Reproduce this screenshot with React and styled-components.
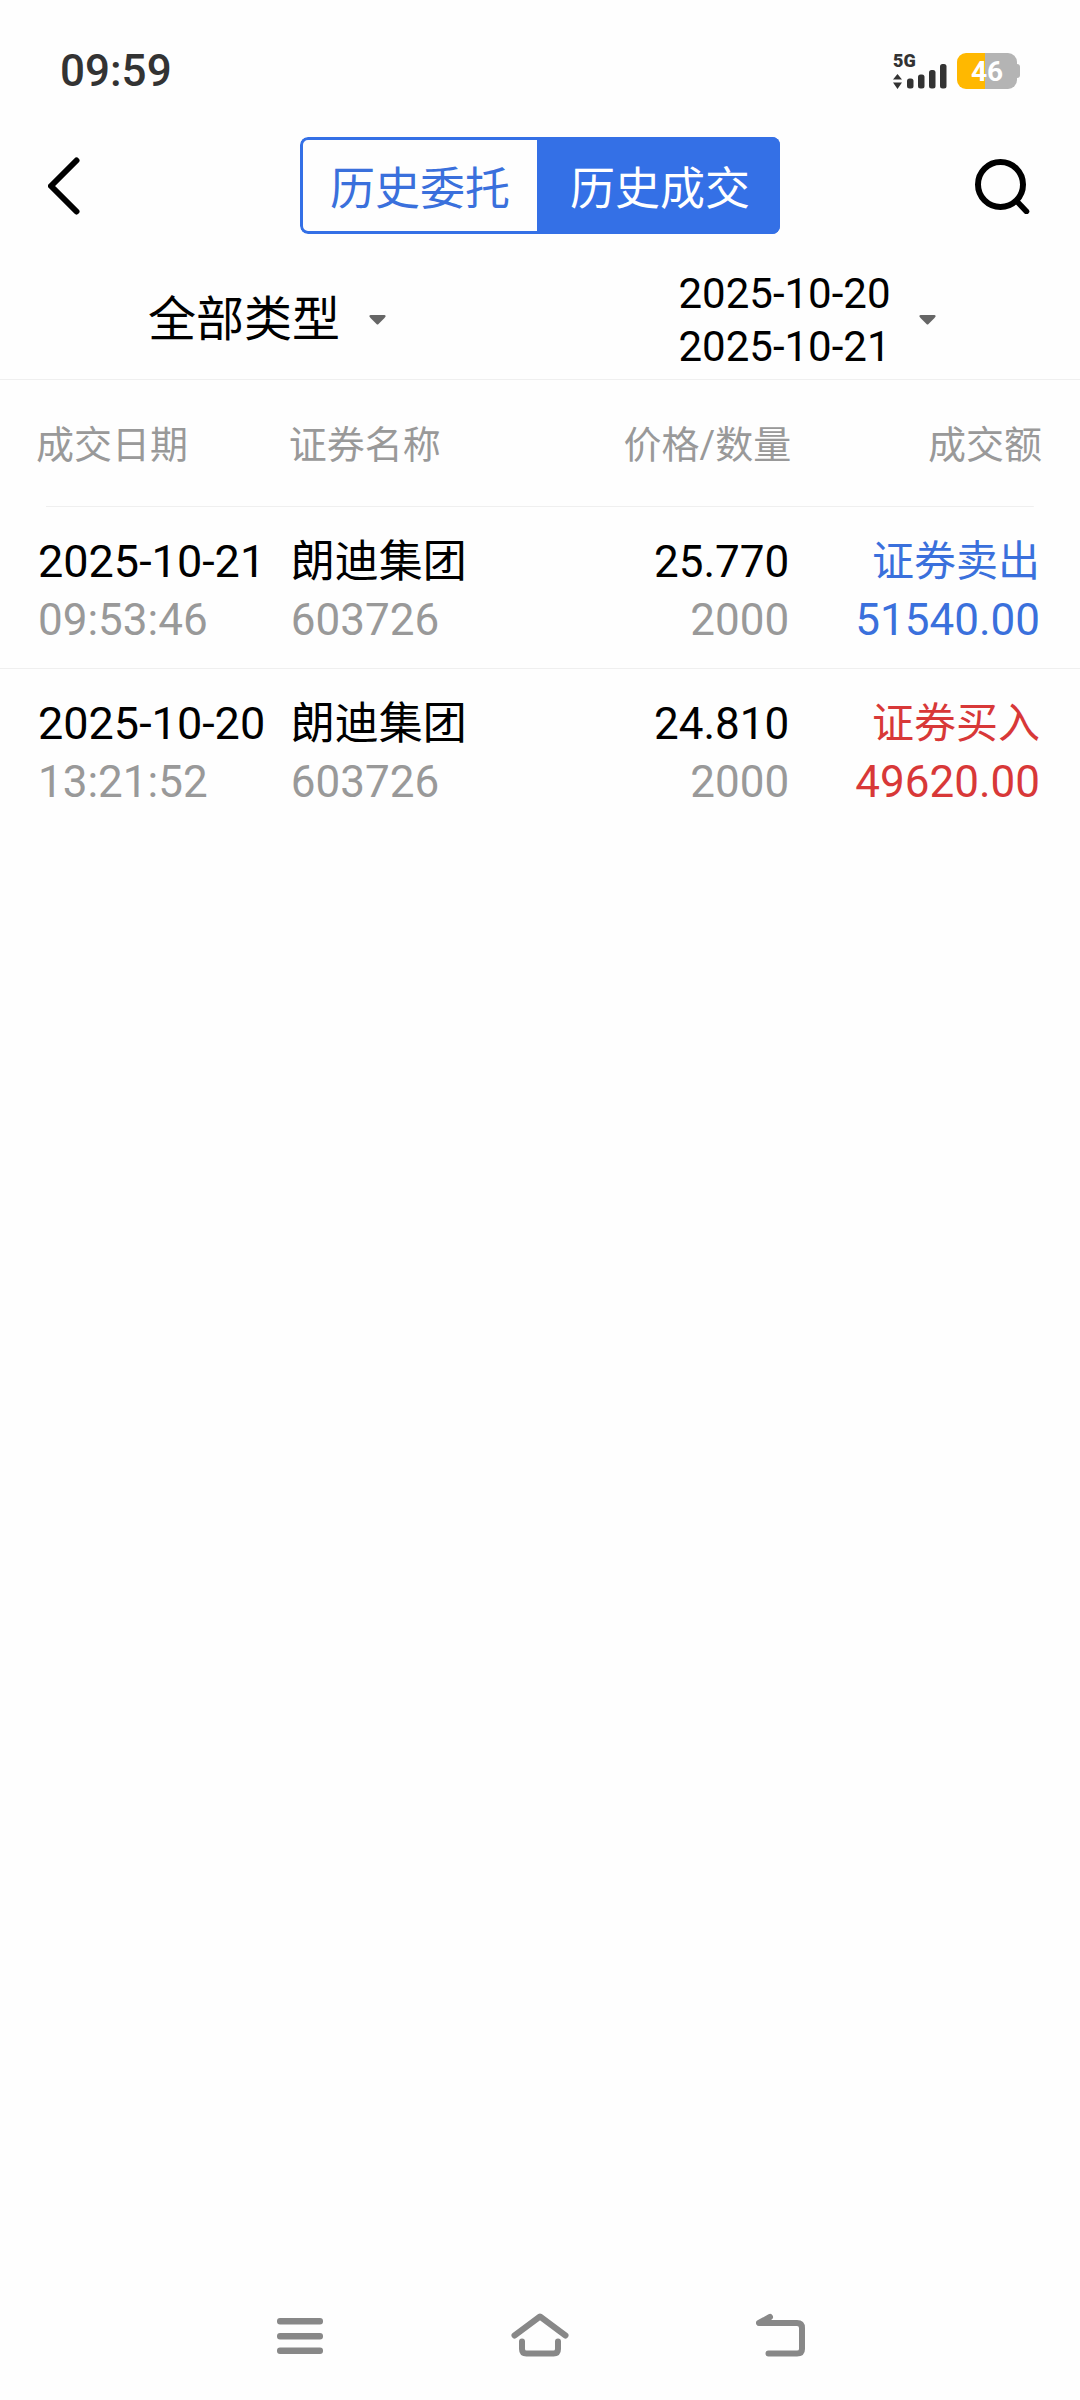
import React, { useState } from 'react';
import styled, { createGlobalStyle } from 'styled-components';

const types = ['全部类型', '证券买入', '证券卖出'];

const deals = [
    { date: '2025-10-21', time: '09:53:46', name: '朗迪集团', code: '603726', price: '25.770', amount: '2000', side: 'sell', sideText: '证券卖出', total: '51540.00' },
    { date: '2025-10-20', time: '13:21:52', name: '朗迪集团', code: '603726', price: '24.810', amount: '2000', side: 'buy', sideText: '证券买入', total: '49620.00' },
];

const Status = () => (
    <StatusBar>
        <Clock>09:59</Clock>
        <StatusRight>
            <Network>
                <span>5G</span>
                <svg width="54" height="26" viewBox="0 0 54 26" fill="#333">
                    <path d="M4.5 11L9 16.5H0ZM4.5 26L0 19.5H9Z" />
                    <rect x="14" y="15.5" width="6.5" height="10" rx="2.5" />
                    <rect x="25" y="11.5" width="6.5" height="14" rx="2.5" />
                    <rect x="36" y="7" width="6.5" height="18.5" rx="2.5" />
                    <rect x="47" y="1" width="6.5" height="24.5" rx="2.5" />
                </svg>
            </Network>
            <Battery>
                <BatteryBody>46</BatteryBody>
                <BatteryTip />
            </Battery>
        </StatusRight>
    </StatusBar>
);

const Arrow = () => (
    <svg width="17" height="10" viewBox="0 0 17 10" fill="#666">
        <path d="M1.5 0H15.5Q17 0 16.5 1.5L15.5 3L9.5 9Q8.5 10 7.5 9L1.5 3L0.5 1.5Q0 0 1.5 0Z" />
    </svg>
);

const App = () => {
    const [tab, setTab] = useState('deals');
    const [type, setType] = useState(types[0]);

    return (
        <>
            <GlobalStyle />
            <Page>
                <Status />
                <Header>
                    <IconButton aria-label="返回">
                        <svg width="32" height="58" viewBox="0 0 32 58" fill="none" stroke="#000" strokeWidth="6" strokeLinecap="round" strokeLinejoin="round">
                            <path d="M28.5 3.5L3 29L28.5 54.5" />
                        </svg>
                    </IconButton>
                    <Tabs role="tablist">
                        <Tab role="tab" aria-selected={tab === 'orders'} $active={tab === 'orders'} onClick={() => setTab('orders')}>历史委托</Tab>
                        <Tab role="tab" aria-selected={tab === 'deals'} $active={tab === 'deals'} onClick={() => setTab('deals')}>历史成交</Tab>
                    </Tabs>
                    <IconButton aria-label="搜索">
                        <svg width="57" height="56" viewBox="0 0 57 56" fill="none" stroke="#000" strokeLinecap="round">
                            <circle cx="25.5" cy="26.5" r="22.5" strokeWidth="6" />
                            <path d="M42.5 44L51.5 53.5" strokeWidth="5.5" />
                        </svg>
                    </IconButton>
                </Header>
                <Filters>
                    <Filter>
                        <TypeSelect aria-label="类型" value={type} onChange={(e) => setType(e.target.value)}>
                            {types.map((t) => <option key={t}>{t}</option>)}
                        </TypeSelect>
                        <Arrow />
                    </Filter>
                    <Filter>
                        <DateButton>
                            <span>
                                2025-10-20<br />2025-10-21
                            </span>
                            <Arrow />
                        </DateButton>
                    </Filter>
                </Filters>
                <Table>
                    <thead>
                        <tr>
                            <Th>成交日期</Th>
                            <Th>证券名称</Th>
                            <Th>价格/数量</Th>
                            <Th>成交额</Th>
                        </tr>
                    </thead>
                    <tbody>
                        {deals.map((deal, i) => (
                            <Row key={deal.date} $line={i < deals.length - 1}>
                                <Td>
                                    <DealDate>{deal.date}</DealDate>
                                    <Sub>{deal.time}</Sub>
                                </Td>
                                <Td>
                                    <Main>{deal.name}</Main>
                                    <Sub>{deal.code}</Sub>
                                </Td>
                                <Td>
                                    <Main>{deal.price}</Main>
                                    <Sub>{deal.amount}</Sub>
                                </Td>
                                <Td>
                                    <Side $side={deal.side}>{deal.sideText}</Side>
                                    <Total $side={deal.side}>{deal.total}</Total>
                                </Td>
                            </Row>
                        ))}
                    </tbody>
                </Table>
                <NavBar>
                    <IconButton aria-label="最近任务">
                        <svg width="46" height="36" viewBox="0 0 46 36" fill="#888">
                            <rect width="46" height="6.5" rx="3" />
                            <rect y="15" width="46" height="6.5" rx="3" />
                            <rect y="29.5" width="46" height="6.5" rx="3" />
                        </svg>
                    </IconButton>
                    <IconButton aria-label="主屏幕">
                        <svg width="58" height="46" viewBox="0 0 58 46" fill="none" stroke="#888" strokeWidth="6" strokeLinecap="round" strokeLinejoin="round">
                            <path d="M3.5 22.5L29 3.5L54.5 22.5" />
                            <path d="M11 28.5V36Q11 40.5 15.5 40.5H42.5Q47 40.5 47 36V28.5" />
                        </svg>
                    </IconButton>
                    <IconButton aria-label="后退">
                        <svg width="49" height="46" viewBox="0 0 49 46" fill="none" stroke="#888" strokeWidth="6" strokeLinecap="round" strokeLinejoin="round">
                            <path d="M14 4L3 10H41Q46 10 46 15V36Q46 40.5 41 40.5H12.5" />
                        </svg>
                    </IconButton>
                </NavBar>
            </Page>
        </>
    );
};

export default App;

const GlobalStyle = createGlobalStyle`
    *{
        box-sizing: border-box;
    }
    body{
        margin: 0;
        background: #fefefe;
        color: #000;
        font-family: Roboto, "Noto Sans CJK SC", sans-serif;
    }
    button, select{
        margin: 0;
        padding: 0;
        border: none;
        background: none;
        color: inherit;
        font: inherit;
        cursor: pointer;
    }
    svg{
        display: block;
        flex: none;
    }
`

const colors = {
    sell: '#3a70dc',
    buy: '#d83838',
}

const Page = styled.div`
    min-height: 100vh;
    display: flex;
    flex-direction: column;
`

const StatusBar = styled.div`
    height: 121px;
    padding: 20px 60px 0;
    display: flex;
    justify-content: space-between;
    align-items: center;
    color: #333;
`

const Clock = styled.div`
    font-size: 44px;
    font-weight: 500;
`

const StatusRight = styled.div`
    display: flex;
    align-items: center;
    gap: 10px;
`

const Network = styled.div`
    display: flex;
    flex-direction: column;
    font-size: 18px;
    font-weight: 900;
    line-height: 16px;
    svg{
        margin-top: -6px;
    }
`

const Battery = styled.div`
    display: flex;
    align-items: center;
`

const BatteryBody = styled.div`
    width: 60px;
    height: 36px;
    border-radius: 9px;
    background: linear-gradient(to right, #ffb800 46%, #b4b4b4 46%);
    color: #fff;
    font-size: 28px;
    font-weight: 700;
    line-height: 37px;
    text-align: center;
`

const BatteryTip = styled.div`
    width: 3px;
    height: 14px;
    border-radius: 0 3px 3px 0;
    background: #b4b4b4;
`

const Header = styled.header`
    height: 129px;
    padding: 0 48px;
    display: grid;
    grid-template-columns: 1fr auto 1fr;
    align-items: center;
    > :last-child{
        justify-self: end;
    }
    > :first-child{
        justify-self: start;
    }
`

const IconButton = styled.button`
    display: flex;
    justify-content: center;
    align-items: center;
`

const Tabs = styled.div`
    display: flex;
    border-radius: 8px;
    overflow: hidden;
`

const Tab = styled.button`
    width: 240px;
    height: 97px;
    border: 3px solid #3470e6;
    background: ${props => props.$active ? '#3470e6' : 'transparent'};
    color: ${props => props.$active ? '#fff' : '#3a70dc'};
    font-size: 45px;
    &:first-child{
        border-radius: 8px 0 0 8px;
    }
`

const Filters = styled.div`
    height: 130px;
    padding-top: 10px;
    display: grid;
    grid-template-columns: 1fr 1fr;
    border-bottom: 1px solid #efefef;
`

const Filter = styled.div`
    padding-right: 6px;
    display: flex;
    justify-content: center;
    align-items: center;
    gap: 28px;
`

const TypeSelect = styled.select`
    appearance: none;
    font-size: 48px;
    line-height: 64px;
`

const DateButton = styled.button`
    display: flex;
    align-items: center;
    gap: 28px;
    font-size: 42px;
    line-height: 53px;
    text-align: left;
`

const Table = styled.table`
    width: 100%;
    table-layout: fixed;
    border-collapse: collapse;
    thead{
        background: linear-gradient(#efefef, #efefef) center bottom / calc(100% - 92px) 1px no-repeat;
    }
    th, td{
        width: 24%;
        text-align: left;
    }
    th:first-child, th:last-child{
        width: 26%;
    }
    th:nth-child(n+3), td:nth-child(n+3){
        text-align: right;
    }
`

const Th = styled.th`
    height: 127px;
    padding: 2px 8px 0;
    color: #999;
    font-size: 38px;
    font-weight: 400;
    line-height: 56px;
    white-space: nowrap;
    &:first-child{
        padding-left: 36px;
    }
    &:last-child{
        padding-right: 38px;
    }
`

const Row = styled.tr`
    height: 161px;
    border-bottom: ${props => props.$line ? '1px solid #efefef' : 'none'};
`

const Td = styled.td`
    padding: 8px 10px 0;
    white-space: nowrap;
    &:first-child{
        padding: 8px 0 0 38px;
    }
    &:last-child{
        padding-right: 40px;
    }
`

const Main = styled.div`
    font-size: 44px;
    line-height: 58px;
`

const DealDate = styled(Main)`
    font-size: 45px;
`

const Sub = styled(Main)`
    color: #999;
`

const Side = styled(Main)`
    color: ${props => colors[props.$side]};
    font-size: 42px;
`

const Total = styled(Main)`
    color: ${props => colors[props.$side]};
`

const NavBar = styled.nav`
    height: 128px;
    margin-top: auto;
    padding: 0 180px;
    display: grid;
    grid-template-columns: repeat(3, 1fr);
`
